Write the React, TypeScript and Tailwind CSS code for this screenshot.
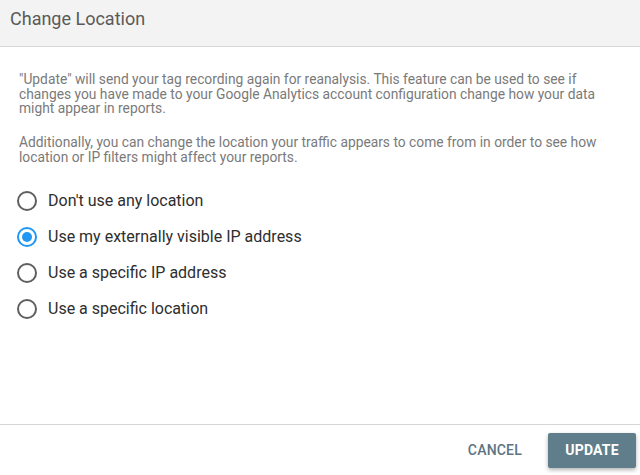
import React, { useState } from "react";

const options = [
  "Don't use any location",
  "Use my externally visible IP address",
  "Use a specific IP address",
  "Use a specific location",
];

export default function App() {
  const [sel, setSel] = useState(1);
  return (
    <div className="w-[640px] h-[475px] bg-white flex flex-col overflow-hidden" style={{ fontFamily: "Roboto, 'Liberation Sans', sans-serif" }}>
      <div className="h-[47px] shrink-0 bg-[#f3f3f3] border-b border-[#d6d6d6] px-[10px] pt-[6px]">
        <h1 className="text-[18px] leading-[26px] text-[#5a5a5a] font-normal">Change Location</h1>
      </div>
      <div className="flex-1 px-[19px] pt-[25px]">
        <p className="max-w-[590px] text-[13.8px] leading-[14.5px] text-[#7a7a7a]">
          "Update" will send your tag recording again for reanalysis. This feature can be used to see if changes you have made to your Google Analytics account configuration change how your data might appear in reports.
        </p>
        <p className="max-w-[590px] mt-[19.5px] text-[13.8px] leading-[14.5px] text-[#7a7a7a]">
          Additionally, you can change the location your traffic appears to come from in order to see how location or IP filters might affect your reports.
        </p>
        <div className="mt-[19px] flex flex-col -ml-[2px]">
          {options.map((o, i) => (
            <label key={o} className="h-[36px] flex items-center gap-[11px] cursor-pointer" onClick={() => setSel(i)}>
              <span
                className={
                  i === sel
                    ? "w-[20px] h-[20px] rounded-full border-2 border-[#2196f3] flex items-center justify-center"
                    : "w-[20px] h-[20px] rounded-full border-2 border-[#5f5f5f] flex items-center justify-center"
                }
              >
                {i === sel && <span className="w-[10px] h-[10px] rounded-full bg-[#2196f3]" />}
              </span>
              <span className="text-[16px] text-[#2e2e2e]">{o}</span>
            </label>
          ))}
        </div>
      </div>
      <div className="h-[51px] shrink-0 border-t border-[#d6d6d6] flex items-center justify-end pr-[4px] gap-[26px]">
        <button className="text-[14px] font-medium text-[#5d7482] tracking-[0.2px]">CANCEL</button>
        <button className="w-[88px] h-[35px] rounded-[2px] bg-[#607d8b] text-white text-[14px] font-bold tracking-[0.2px] shadow-[0_2px_4px_rgba(0,0,0,0.3)]">
          UPDATE
        </button>
      </div>
    </div>
  );
}
